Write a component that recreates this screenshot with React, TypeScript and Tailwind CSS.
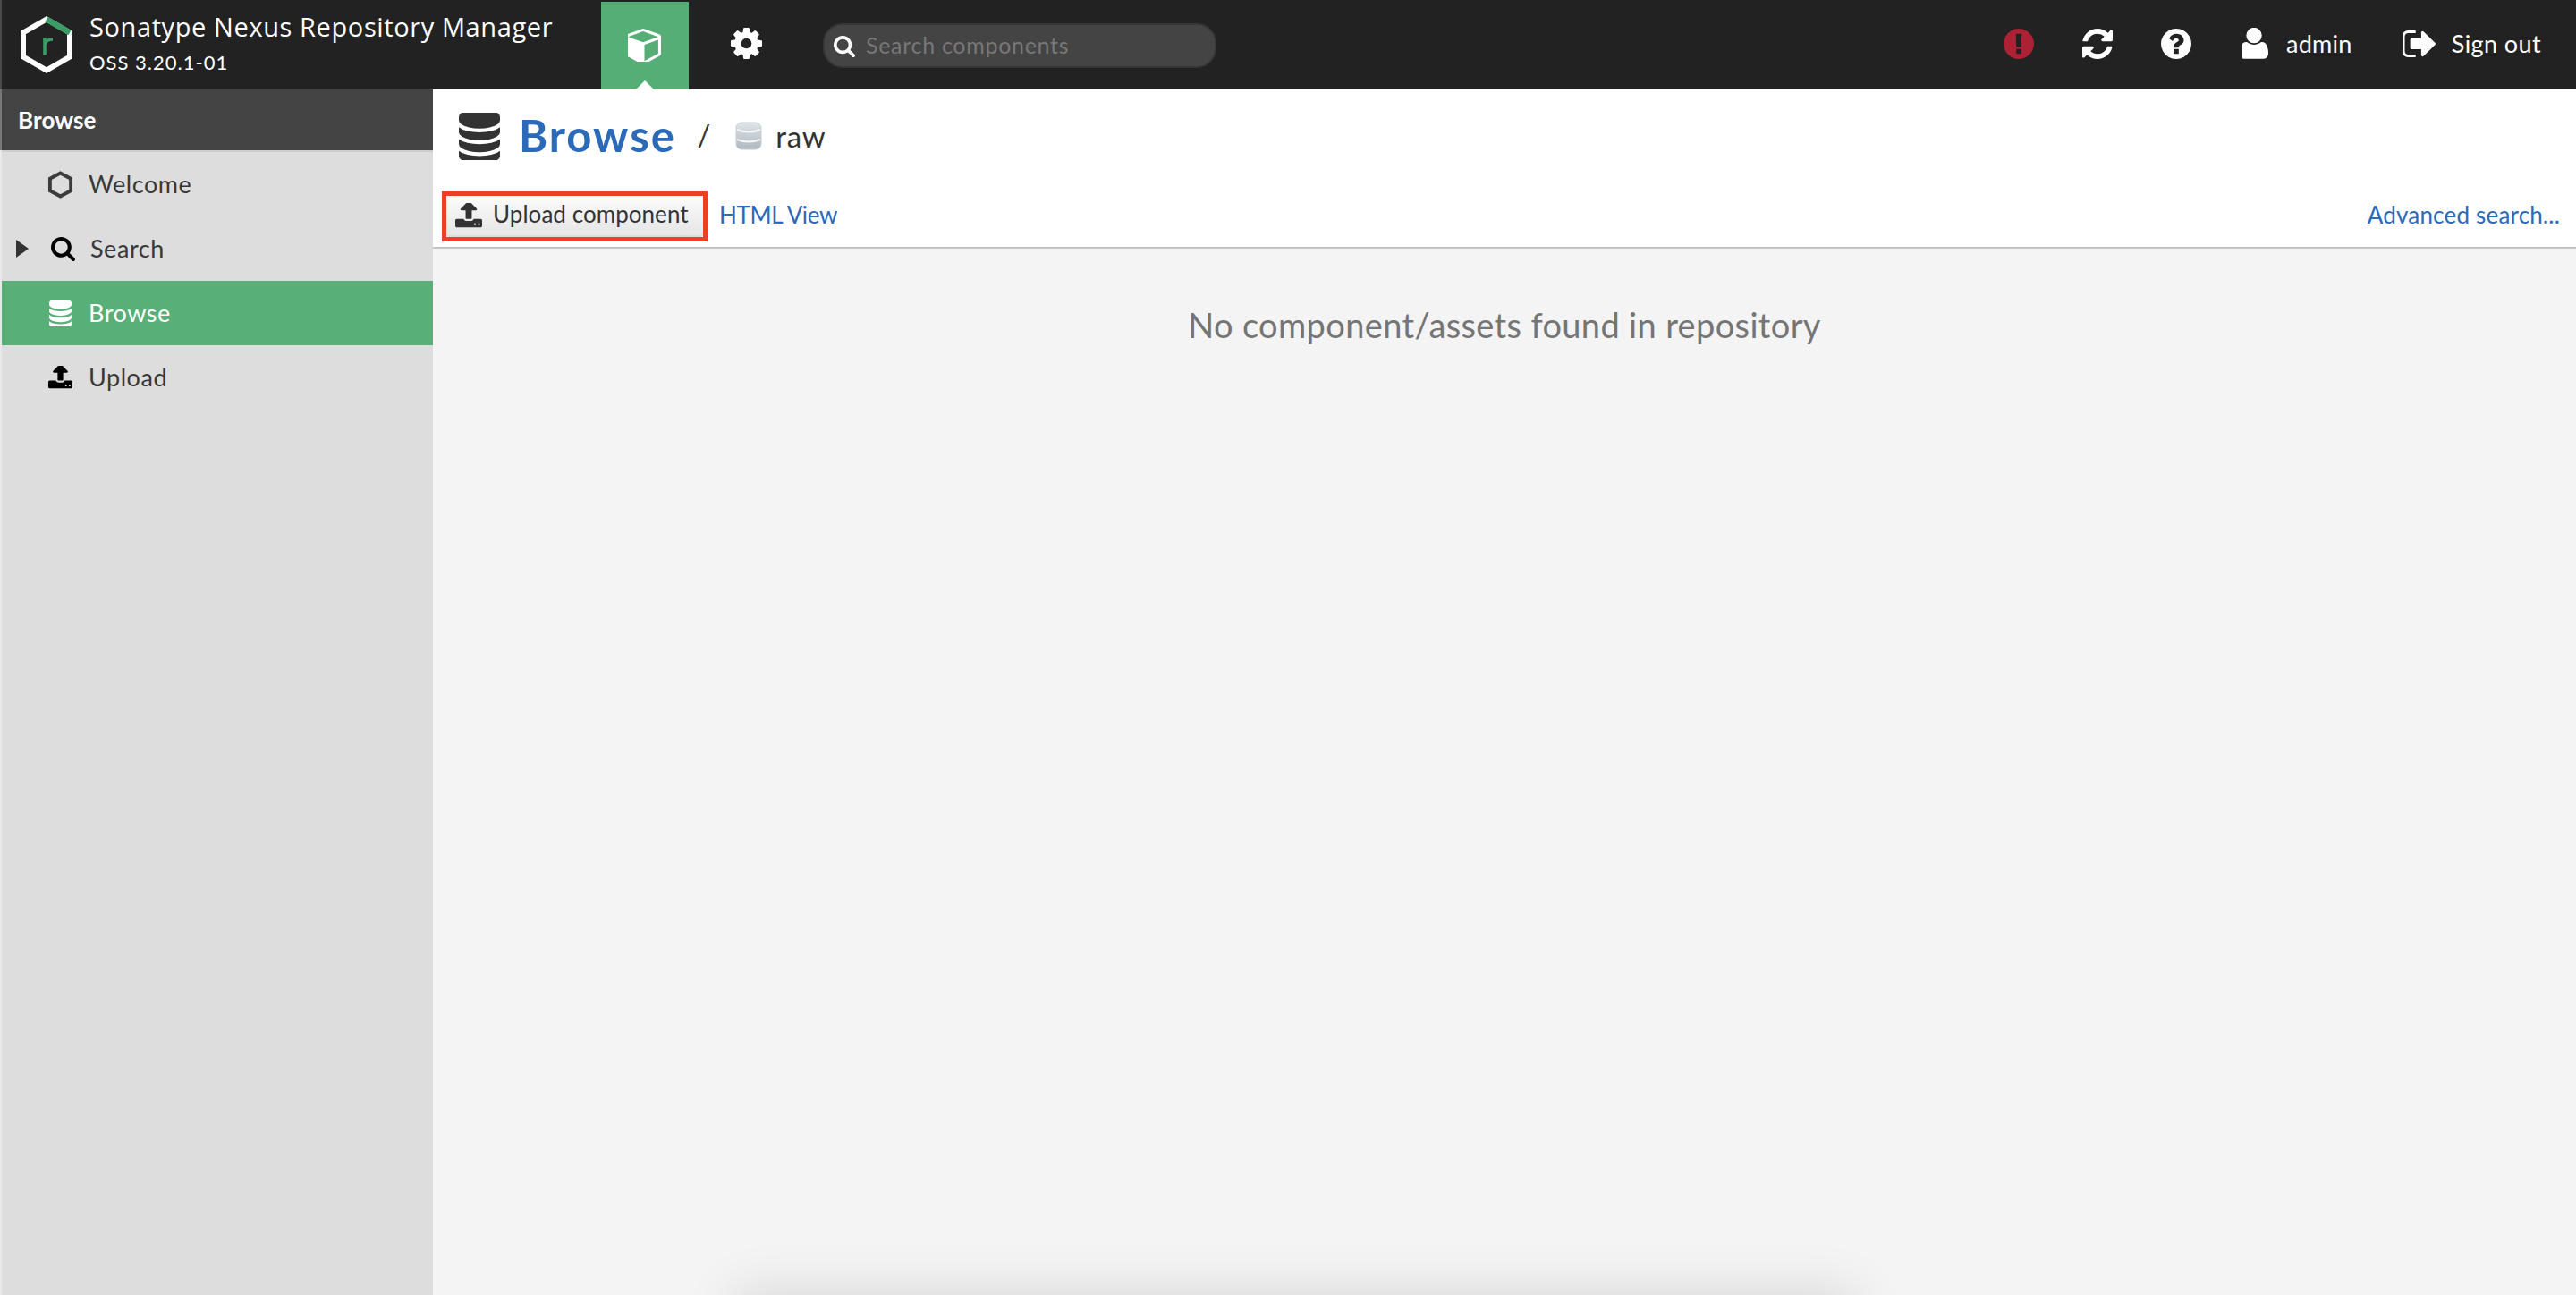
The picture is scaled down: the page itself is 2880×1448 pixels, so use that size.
import React from "react";

const P: Record<string, string> = {
  cube: "M896 1629l640-349v-636l-640 233v752zm-64-865l698-254-698-254-698 254zm832-252v768q0 35-18 65t-49 47l-704 384q-28 16-61 16t-61-16l-704-384q-31-17-49-47t-18-65v-768q0-40 23-73t61-47l704-256q22-8 44-8t44 8l704 256q38 14 61 47t23 73z",
  cog: "M1152 896q0-106-75-181t-181-75-181 75-75 181 75 181 181 75 181-75 75-181zm512-109v222q0 12-8 23t-20 13l-185 28q-19 54-39 91 35 50 107 138 10 12 10 25t-9 23q-27 37-99 108t-94 71q-12 0-26-9l-138-108q-44 23-91 38-16 136-29 186-7 28-36 28h-222q-14 0-24.5-8.5t-11.5-21.5l-28-184q-49-16-90-37l-141 107q-10 9-25 9-14 0-25-11-126-114-165-168-7-10-7-23 0-12 8-23 15-21 51-66.5t54-70.5q-27-50-41-99l-183-27q-13-2-21-12.5t-8-23.5v-222q0-12 8-23t19-13l186-28q14-46 39-92-40-57-107-138-10-12-10-24 0-10 9-23 26-36 98.5-107.5t94.5-71.5q13 0 26 10l138 107q44-23 91-38 16-136 29-186 7-28 36-28h222q14 0 24.5 8.5t11.5 21.5l28 184q49 16 90 37l142-107q9-9 24-9 13 0 25 10 129 119 165 170 7 8 7 22 0 12-8 23-15 21-51 66.5t-54 70.5q26 50 41 98l183 28q13 2 21 12.5t8 23.5z",
  search: "M1216 832q0-185-131.5-316.5t-316.5-131.5-316.5 131.5-131.5 316.5 131.5 316.5 316.5 131.5 316.5-131.5 131.5-316.5zm512 832q0 52-38 90t-90 38q-54 0-90-38l-343-342q-179 124-399 124-143 0-273.5-55.5t-225-150-150-225-55.5-273.5 55.5-273.5 150-225 225-150 273.5-55.5 273.5 55.5 225 150 150 225 55.5 273.5q0 220-124 399l343 343q37 37 37 90z",
  exclamation: "M896 128q209 0 385.5 103t279.5 279.5 103 385.5-103 385.5-279.5 279.5-385.5 103-385.5-103-279.5-279.5-103-385.5 103-385.5 279.5-279.5 385.5-103zm128 1247v-190q0-14-9-23.5t-22-9.5h-192q-13 0-23 10t-10 23v190q0 13 10 23t23 10h192q13 0 22-9.5t9-23.5zm-2-344l18-621q0-12-10-18-10-8-24-8h-220q-14 0-24 8-10 6-10 18l17 621q0 10 10 17.5t24 7.5h185q14 0 23.5-7.5t10.5-17.5z",
  refresh: "M1639 1056q0 5-1 7-64 268-268 434.5t-478 166.5q-146 0-282.5-55t-243.5-157l-129 129q-19 19-45 19t-45-19-19-45v-448q0-26 19-45t45-19h448q26 0 45 19t19 45-19 45l-137 137q71 66 161 102t187 36q134 0 250-65t186-179q11-17 53-117 8-23 30-23h192q13 0 22.5 9.5t9.5 22.5zm25-800v448q0 26-19 45t-45 19h-448q-26 0-45-19t-19-45 19-45l138-138q-148-137-349-137-134 0-250 65t-186 179q-11 17-53 117-8 23-30 23h-199q-13 0-22.5-9.5t-9.5-22.5v-7q65-268 270-434.5t480-166.5q146 0 284 55.5t245 156.5l130-129q19-19 45-19t45 19 19 45z",
  question: "M1024 1376v-192q0-14-9-23t-23-9h-192q-14 0-23 9t-9 23v192q0 14 9 23t23 9h192q14 0 23-9t9-23zm256-672q0-88-55.5-163t-138.5-116-170-41q-243 0-371 213-15 24 8 42l132 100q7 6 19 6 16 0 25-12 53-68 86-92 34-24 86-24 48 0 85.5 26t37.5 59q0 38-20 61t-68 45q-63 28-115.5 86.5t-52.5 125.5v36q0 14 9 23t23 9h192q14 0 23-9t9-23q0-19 21.5-49.5t54.5-49.5q32-18 49-28.5t46-35 44.5-48 28-60.5 12.5-81zm384 192q0 209-103 385.5t-279.5 279.5-385.5 103-385.5-103-279.5-279.5-103-385.5 103-385.5 279.5-279.5 385.5-103 385.5 103 279.5 279.5 103 385.5z",
  user: "M1536 1399q0 120-73 189.5t-194 69.5h-874q-121 0-194-69.5t-73-189.5q0-53 3.5-103.5t14-109 26.5-108.5 43-97.5 62-81 85.5-53.5 111.5-20q9 0 42 21.5t74.5 48 108 48 133.5 21.5 133.5-21.5 108-48 74.5-48 42-21.5q61 0 111.5 20t85.5 53.5 62 81 43 97.5 26.5 108.5 14 109 3.5 103.5zm-320-893q0 159-112.5 271.5t-271.5 112.5-271.5-112.5-112.5-271.5 112.5-271.5 271.5-112.5 271.5 112.5 112.5 271.5z",
  signout: "M704 1440q0 4 1 20t.5 26.5-3 23.5-10 19.5-20.5 6.5h-320q-119 0-203.5-84.5t-84.5-203.5v-704q0-119 84.5-203.5t203.5-84.5h320q13 0 22.5 9.5t9.5 22.5q0 4 1 20t.5 26.5-3 23.5-10 19.5-20.5 6.5h-320q-66 0-113 47t-47 113v704q0 66 47 113t113 47h312l11.5 1 11.5 3 8 5.5 7 9 2 13.5zm928-544q0 26-19 45l-544 544q-19 19-45 19t-45-19-19-45v-288h-448q-26 0-45-19t-19-45v-384q0-26 19-45t45-19h448v-288q0-26 19-45t45-19 45 19l544 544q19 19 19 45z",
  database: "M896 768q237 0 443-43t325-127v170q0 69-103 128t-280 93.5-385 34.5-385-34.5-280-93.5-103-128v-170q119 84 325 127t443 43zm0 768q237 0 443-43t325-127v170q0 69-103 128t-280 93.5-385 34.5-385-34.5-280-93.5-103-128v-170q119 84 325 127t443 43zm0-384q237 0 443-43t325-127v170q0 69-103 128t-280 93.5-385 34.5-385-34.5-280-93.5-103-128v-170q119 84 325 127t443 43zm0-1152q208 0 385 34.5t280 93.5 103 128v128q0 69-103 128t-280 93.5-385 34.5-385-34.5-280-93.5-103-128v-128q0-69 103-128t280-93.5 385-34.5z",
  upload: "M1344 1472q0-26-19-45t-45-19-45 19-19 45 19 45 45 19 45-19 19-45zm256 0q0-26-19-45t-45-19-45 19-19 45 19 45 45 19 45-19 19-45zm128-224v320q0 40-28 68t-68 28h-1472q-40 0-68-28t-28-68v-320q0-40 28-68t68-28h427q21 56 70.5 92t110.5 36h256q61 0 110.5-36t70.5-92h427q40 0 68 28t28 68zm-325-648q-17 40-59 40h-256v448q0 26-19 45t-45 19h-256q-26 0-45-19t-19-45v-448h-256q-42 0-59-40-17-39 14-69l448-448q19-19 45-19t45 19l448 448q31 30 14 69z",
};

const VB: Record<string, string> = {
  cube: "128 128 1536 1536",
  cog: "128 128 1536 1536",
  search: "64 128 1664 1664",
  exclamation: "128 128 1536 1536",
  refresh: "128 128 1536 1536",
  question: "128 128 1536 1536",
  user: "256 128 1280 1536",
  signout: "128 256 1504 1280",
  database: "128 128 1536 1536",
  upload: "64 192 1664 1568",
};

function Fa({ name, className }: { name: string; className: string }) {
  return (
    <svg viewBox={VB[name]} preserveAspectRatio="none" className={className} fill="currentColor">
      <path d={P[name]} />
    </svg>
  );
}

function Logo() {
  return (
    <svg viewBox="0 0 60 64" className="w-[60px] h-[64px] shrink-0">
      <path d="M30 3.5 L4 18.5 V45.5 L30 60.5 L56 45.5 V18.5 Z" fill="none" stroke="#ffffff" strokeWidth="6" />
      <path d="M30 3.5 L56 18.5" fill="none" stroke="#3b9c66" strokeWidth="6.5" />
      <path d="M28 24 V43 M28 31 Q30 26 37 26" fill="none" stroke="#3b9c66" strokeWidth="3.6" />
    </svg>
  );
}

function RepoIcon() {
  return (
    <svg viewBox="0 0 30 32" className="w-[30px] h-[32px] shrink-0">
      <defs>
        <linearGradient id="rg" x1="0" y1="0" x2="0" y2="1">
          <stop offset="0" stopColor="#dfe5e8" />
          <stop offset="1" stopColor="#aeb8bf" />
        </linearGradient>
      </defs>
      <rect x="1" y="1" width="28" height="30" rx="6" fill="url(#rg)" stroke="#c9d0d4" />
      <path d="M2 9 Q15 14 28 9 M2 20 Q15 25 28 20" fill="none" stroke="#f4f6f7" strokeWidth="2" />
    </svg>
  );
}

function NavItem({
  icon,
  label,
  active,
  caret,
}: {
  icon: React.ReactNode;
  label: string;
  active?: boolean;
  caret?: boolean;
}) {
  return (
    <div
      className={`h-[72px] flex items-center text-[27px] tracking-[0.55px] ${
        active ? "bg-[#58b078] text-white" : "text-[#383838]"
      }`}
    >
      <div className="w-[16px] shrink-0" />
      <div className="w-[14px] shrink-0 flex items-center">
        {caret && (
          <span className="block w-0 h-0 border-y-[10px] border-y-transparent border-l-[14px] border-l-[#333]" />
        )}
      </div>
      <div className="w-[67px] shrink-0 flex justify-center pr-[12px] pl-[16px]">{icon}</div>
      <span className={caret ? "ml-[2px]" : ""}>{label}</span>
    </div>
  );
}

export default function App() {
  return (
    <div className="relative w-[2880px] h-[1448px] overflow-hidden flex flex-col bg-white font-['Lato','Liberation_Sans',sans-serif]">
      <header className="h-[100px] shrink-0 bg-[#222222] flex items-center border-l-2 border-l-[#4a4a4a] text-white">
        <div className="ml-[20px] mr-[18px] flex items-center">
          <Logo />
        </div>
        <div className="w-[572px] shrink-0 flex flex-col">
          <div className="text-[29px] leading-[34px] font-medium tracking-[0.6px] font-['Open_Sans','Liberation_Sans',sans-serif] -mt-[4px]">Sonatype Nexus Repository Manager</div>
          <div className="text-[22px] leading-[26px] mt-[10px] tracking-[1px]">OSS 3.20.1-01</div>
        </div>
        <div className="relative w-[98px] h-[98px] mt-[2px] bg-[#55ae76] flex items-center justify-center shrink-0">
          <Fa name="cube" className="w-[37px] h-[37px] text-white -ml-[2px] -mt-[2px]" />
          <span className="absolute bottom-0 left-[39px] w-0 h-0 border-x-[10px] border-x-transparent border-b-[10px] border-b-white" />
        </div>
        <div className="w-[47px] shrink-0" />
        <Fa name="cog" className="w-[35px] h-[35px] shrink-0 mt-[-4px]" />
        <div className="w-[68px] shrink-0" />
        <div className="w-[440px] h-[50px] shrink-0 mt-[2px] rounded-[22px] bg-[#444444] border-2 border-[#363636] flex items-center pl-[10px]">
          <Fa name="search" className="w-[24px] h-[24px] text-white mt-[2px]" />
          <span className="ml-[12px] text-[25px] text-[#777777] tracking-[0.7px]">Search components</span>
        </div>
        <div className="flex-1 flex items-center justify-end pr-[39px]">
          <Fa name="exclamation" className="w-[34px] h-[34px] text-[#ad2135] -mt-[3px]" />
          <Fa name="refresh" className="w-[34px] h-[34px] ml-[54px] -mt-[3px]" />
          <Fa name="question" className="w-[34px] h-[34px] ml-[54px] -mt-[3px]" />
          <Fa name="user" className="w-[29px] h-[35px] ml-[57px] -mt-[3px]" />
          <span className="ml-[20px] text-[27px] tracking-[0.3px] -mt-[1px]">admin</span>
          <Fa name="signout" className="w-[36px] h-[30px] ml-[57px] -mt-[3px]" />
          <span className="ml-[18px] text-[27px] tracking-[0.4px] -mt-[1px]">Sign out</span>
        </div>
      </header>
      <div className="flex-1 flex min-h-0">
        <aside className="w-[484px] shrink-0 bg-[#dddddd] flex flex-col border-l-2 border-l-[#e8e8e8]">
          <div className="h-[68px] bg-[#444444] text-white font-bold text-[26px] tracking-[0.1px] flex items-center pl-[18px] -ml-[2px] border-l-2 border-l-[#777777]">
            Browse
          </div>
          <div className="h-[2px] bg-[#cccccc]" />
          <NavItem icon={<svg viewBox="0 0 30 32" className="w-[29px] h-[31px] shrink-0"><path d="M15 2.5 L27 9 V23 L15 29.5 L3 23 V9 Z" fill="none" stroke="#3c3c3c" strokeWidth="4" /></svg>} label="Welcome" />
          <NavItem caret icon={<Fa name="search" className="w-[27px] h-[27px] shrink-0 text-black ml-[5px]" />} label="Search" />
          <NavItem active icon={<Fa name="database" className="w-[25px] h-[29px] shrink-0 text-white" />} label="Browse" />
          <NavItem icon={<Fa name="upload" className="w-[27px] h-[27px] shrink-0 text-black" />} label="Upload" />
        </aside>
        <main className="flex-1 min-w-0 flex flex-col bg-[#f4f4f4]">
          <div className="bg-white h-[178px] shrink-0 border-b-2 border-b-[#c4c4c4] flex flex-col">
            <div className="h-[114px] shrink-0 flex items-center pl-[29px] pb-[10px]">
              <Fa name="database" className="w-[46px] h-[53px] text-[#333333]" />
              <span className="ml-[21px] text-[49px] font-bold text-[#2a6ab9] tracking-[2px]">Browse</span>
              <span className="ml-[24px] text-[32px] text-[#333333] -mt-[3px]">/</span>
              <span className="ml-[28px]"><RepoIcon /></span>
              <span className="ml-[15px] text-[33px] text-[#333333] tracking-[0.7px] mt-[2px]">raw</span>
            </div>
            <div className="flex items-start pl-[10px] pr-[18px]">
              <div className="w-[297px] h-[56px] border-[5px] border-[#ee3f24] bg-white">
                <div className="h-full rounded-[3px] flex items-center pl-[10px] bg-gradient-to-b from-[#fbfbfb] to-[#e6e6e6] border-b-2 border-b-[#dedede]">
                  <Fa name="upload" className="w-[30px] h-[29px] text-[#333333]" />
                  <span className="ml-[12px] text-[26px] text-[#333333] tracking-[0.05px] -mt-[3px]">Upload component</span>
                </div>
              </div>
              <span className="ml-[13px] h-[52px] flex items-center text-[26px] text-[#2a6ab9] tracking-[-0.4px]">HTML View</span>
              <span className="ml-auto h-[52px] flex items-center text-[26px] text-[#2a6ab9] tracking-[0.2px]">Advanced search...</span>
            </div>
          </div>
          <div className="pt-[62px] text-center text-[38px] text-[#757575] tracking-[0.35px] leading-[46px]">
            No component/assets found in repository
          </div>
        </main>
      </div>
      <div className="absolute left-[850px] w-[1195px] top-[1475px] h-[60px] bg-[#dcdcdc] shadow-[0_0_60px_28px_rgba(0,0,0,0.13)]" />
    </div>
  );
}
